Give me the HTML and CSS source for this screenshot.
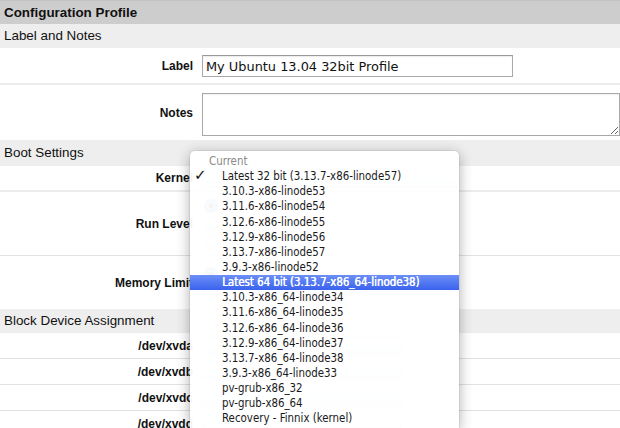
FILE: index.html
```html
<!DOCTYPE html>
<html>
<head>
<meta charset="utf-8">
<link rel="stylesheet" href="styles.css">
</head>
<body>
<div class="page">
  <div class="title">Configuration Profile</div>

  <div class="section">Label and Notes</div>
  <div class="row row-label sep-wide">
    <div class="lbl">Label</div>
    <div class="field"><input class="text" type="text" value="My Ubuntu 13.04 32bit Profile"></div>
  </div>
  <div class="row row-notes">
    <div class="lbl">Notes</div>
    <div class="field"><textarea class="notes"></textarea></div>
  </div>

  <div class="section section-boot">Boot Settings</div>
  <div class="row row-kernel sep-wide">
    <div class="lbl">Kernel</div>
    <div class="field"><div class="select kernel-select"></div></div>
  </div>
  <div class="row row-run sep-thin">
    <div class="lbl">Run Level</div>
    <div class="field radios">
      <span class="radio on"></span>
      <span class="radio"></span>
      <span class="radio"></span>
    </div>
  </div>
  <div class="row row-mem">
    <div class="lbl">Memory Limit</div>
    <div class="field radios">
      <span class="radio on"></span>
      <span class="radio"></span>
    </div>
  </div>

  <div class="section">Block Device Assignment</div>
  <div class="row row-dev sep-thin">
    <div class="lbl">/dev/xvda</div>
    <div class="field"><div class="select dev-select"></div></div>
  </div>
  <div class="row row-dev sep-thin">
    <div class="lbl">/dev/xvdb</div>
    <div class="field"><div class="select dev-select"></div></div>
  </div>
  <div class="row row-dev sep-thin">
    <div class="lbl">/dev/xvdc</div>
    <div class="field"><div class="select dev-select"></div></div>
  </div>
  <div class="row row-dev sep-thin">
    <div class="lbl">/dev/xvdd</div>
    <div class="field"><div class="select dev-select"></div></div>
  </div>

  <div class="menu">
    <div class="mi head">Current</div>
    <div class="mi checked"><span class="check">✓</span>Latest 32 bit (3.13.7-x86-linode57)</div>
    <div class="mi">3.10.3-x86-linode53</div>
    <div class="mi">3.11.6-x86-linode54</div>
    <div class="mi">3.12.6-x86-linode55</div>
    <div class="mi">3.12.9-x86-linode56</div>
    <div class="mi">3.13.7-x86-linode57</div>
    <div class="mi">3.9.3-x86-linode52</div>
    <div class="mi active">Latest 64 bit (3.13.7-x86_64-linode38)</div>
    <div class="mi">3.10.3-x86_64-linode34</div>
    <div class="mi">3.11.6-x86_64-linode35</div>
    <div class="mi">3.12.6-x86_64-linode36</div>
    <div class="mi">3.12.9-x86_64-linode37</div>
    <div class="mi">3.13.7-x86_64-linode38</div>
    <div class="mi">3.9.3-x86_64-linode33</div>
    <div class="mi">pv-grub-x86_32</div>
    <div class="mi">pv-grub-x86_64</div>
    <div class="mi">Recovery - Finnix (kernel)</div>
  </div>
</div>
</body>
</html>
```

FILE: styles.css
```css
html, body {
  margin: 0;
  padding: 0;
  background: #fff;
}
body {
  width: 620px;
  height: 428px;
  overflow: hidden;
  font-family: "Liberation Sans", Arial, sans-serif;
  color: #000;
}
.page {
  position: relative;
  width: 620px;
  height: 428px;
  overflow: hidden;
}
.title {
  height: 24px;
  box-sizing: border-box;
  padding-left: 4px;
  line-height: 23px;
  background: #cdcdcd;
  border-top: 1px solid #c2c2c2;
  font-weight: bold;
  font-size: 13.4px;
  color: #111;
}
.section {
  height: 24px;
  padding-left: 4px;
  line-height: 24px;
  background: #eeeeee;
  font-size: 13.4px;
  color: #111;
}
.section-boot {
  height: 26px;
  line-height: 25px;
}
.row {
  display: flex;
  align-items: center;
  box-sizing: border-box;
}
.lbl {
  width: 193px;
  flex: none;
  text-align: right;
  font-weight: bold;
  font-size: 12px;
  color: #111;
}
.field {
  margin-left: 9px;
  flex: 1;
  display: flex;
  align-items: center;
}
.sep-wide {
  border-bottom: 2px solid #ececec;
}
.sep-thin {
  border-bottom: 1px solid #e2e2e2;
}
.row-label { height: 37px; }
.row-notes { height: 55px; }
.row-kernel { height: 26px; }
.row-run { height: 64px; }
.row-mem { height: 53px; }
.row-dev { height: 26px; }

.text {
  width: 311px;
  height: 22px;
  box-sizing: border-box;
  border: 1px solid #a9a9a9;
  border-top-color: #9a9a9a;
  box-shadow: inset 0 1px 1px rgba(0,0,0,0.08);
  padding: 0 0 0 3px;
  font-family: "DejaVu Sans", sans-serif;
  font-size: 12.9px;
  color: #111;
  outline: none;
  margin-top: 1px;
}
.notes {
  width: 418px;
  height: 43px;
  box-sizing: border-box;
  border: 1px solid #a9a9a9;
  box-shadow: inset 0 1px 1px rgba(0,0,0,0.06);
  margin: 4px 0 0 0;
  resize: both;
  display: block;
}
.select {
  height: 19px;
  box-sizing: border-box;
  border: 1px solid #c9d5e6;
  border-radius: 4px;
  background: linear-gradient(#f6f9fd, #dfe8f4);
}
.kernel-select {
  width: 257px;
}
.dev-select {
  width: 200px;
}
.radios {
  flex-direction: column;
  align-items: flex-start;
  gap: 4px;
  padding-left: 2px;
}
.radio {
  width: 12px;
  height: 12px;
  border-radius: 50%;
  border: 1px solid #b8b8b8;
  background: linear-gradient(#fff, #e6e6e6);
}
.radio.on {
  background: radial-gradient(circle, #333 0 2px, #7fa8e8 3px, #4a86d8 100%);
  border-color: #4a78c0;
}

.menu {
  position: absolute;
  left: 190px;
  top: 151px;
  width: 269px;
  padding-top: 3px;
  height: 274px;
  background: rgba(255,255,255,0.95);
  border-radius: 5px 5px 0 0;
  box-shadow: 0 3px 14px rgba(0,0,0,0.32), 0 0 0 1px rgba(0,0,0,0.06);
  font-family: "DejaVu Sans", sans-serif;
  font-stretch: condensed;
  font-size: 11.4px;
  color: #1a1a1a;
  overflow: hidden;
}
.mi {
  position: relative;
  height: 15.15px;
  line-height: 15px;
  padding-left: 32px;
  white-space: nowrap;
}
.mi.head {
  padding-left: 19px;
  color: #8a8a8a;
}
.check {
  position: absolute;
  left: 4px;
  top: -1px;
  font-size: 15px;
  font-weight: bold;
  font-stretch: normal;
  color: #111;
}
.mi.active {
  background: linear-gradient(#6c8ff6, #3a62ee);
  color: #fff;
  text-shadow: 0.4px 0 0 #fff;
}
```
